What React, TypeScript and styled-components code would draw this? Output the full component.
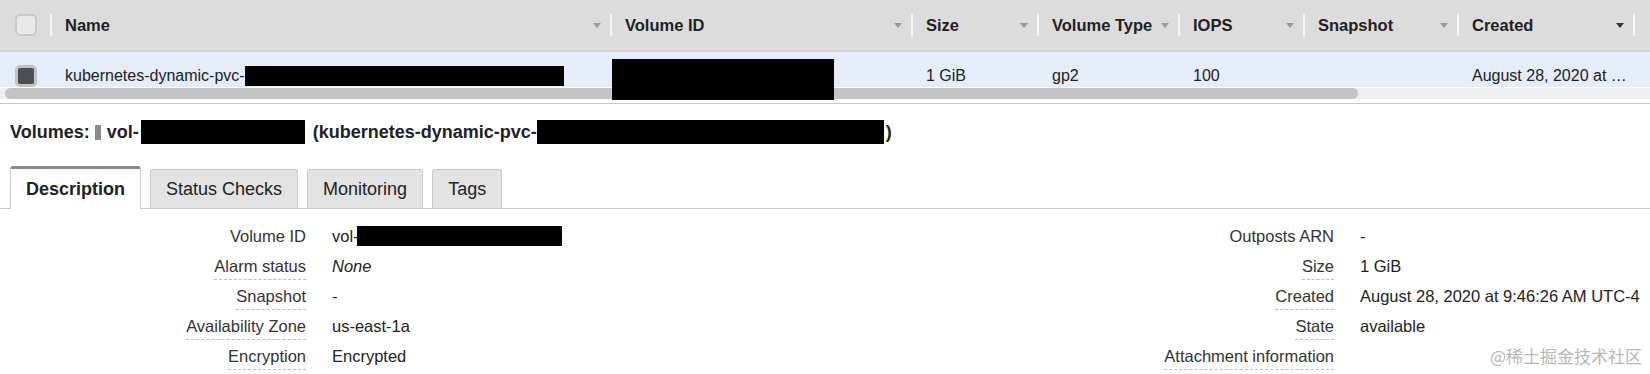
import React from "react";
import styled, { createGlobalStyle, css } from "styled-components";

const GlobalStyle = createGlobalStyle`
  html, body {
    margin: 0;
    padding: 0;
    background: #ffffff;
  }
  body {
    font-family: "Liberation Sans", Arial, sans-serif;
    color: #222;
  }
`;

type Column = { key: string; label?: string; width: string; sorted?: boolean };

const columns: Column[] = [
  { key: "check", width: "50px" },
  { key: "name", label: "Name", width: "560px" },
  { key: "volumeId", label: "Volume ID", width: "301px" },
  { key: "size", label: "Size", width: "126px" },
  { key: "type", label: "Volume Type", width: "141px" },
  { key: "iops", label: "IOPS", width: "125px" },
  { key: "snapshot", label: "Snapshot", width: "154px" },
  { key: "created", label: "Created", width: "176px", sorted: true },
  { key: "rest", width: "1fr" },
];

const gridCols = columns.map((c) => c.width).join(" ");

const leftDetails = [
  { label: "Volume ID", value: "vol-", redact: 205, plain: true },
  { label: "Alarm status", value: "None", italic: true },
  { label: "Snapshot", value: "-" },
  { label: "Availability Zone", value: "us-east-1a" },
  { label: "Encryption", value: "Encrypted" },
];

const rightDetails = [
  { label: "Outposts ARN", value: "-", plain: true },
  { label: "Size", value: "1 GiB" },
  { label: "Created", value: "August 28, 2020 at 9:46:26 AM UTC-4" },
  { label: "State", value: "available" },
  { label: "Attachment information", value: "" },
];

const tabs = ["Description", "Status Checks", "Monitoring", "Tags"];

const App = () => {
  return (
    <Page>
      <GlobalStyle />
      <Table>
        <HeaderRow>
          {columns.map((col) => {
            if (col.key === "check") {
              return (
                <CheckCell key={col.key}>
                  <Checkbox />
                </CheckCell>
              );
            }
            if (col.key === "rest") return <HeaderCell key={col.key} />;
            return (
              <HeaderCell key={col.key}>
                <span>{col.label}</span>
                <SortArrow $active={col.sorted} />
              </HeaderCell>
            );
          })}
        </HeaderRow>
        <DataRow>
          <CheckCell>
            <Checkbox $checked />
          </CheckCell>
          <DataCell>
            kubernetes-dynamic-pvc-
            <Redact $w={319} $h={20} />
          </DataCell>
          <DataCell $pad={2}>
            <Redact $w={222} $h={41} $overflow />
          </DataCell>
          <DataCell>1 GiB</DataCell>
          <DataCell>gp2</DataCell>
          <DataCell>100</DataCell>
          <DataCell />
          <DataCell>August 28, 2020 at …</DataCell>
          <DataCell />
        </DataRow>
        <ScrollTrack>
          <ScrollThumb />
        </ScrollTrack>
      </Table>

      <Heading>
        Volumes:
        <Marker />
        <HeadingPart $gap={6}>vol-</HeadingPart>
        <Redact $w={164} $h={24} $gap={2} />
        <HeadingPart $gap={8}>(kubernetes-dynamic-pvc-</HeadingPart>
        <Redact $w={347} $h={24} />
        <HeadingPart $gap={2}>)</HeadingPart>
      </Heading>

      <TabBar>
        {tabs.map((t, i) => (
          <Tab key={t} $active={i === 0}>
            {t}
          </Tab>
        ))}
      </TabBar>

      <Details>
        <DetailGrid $labelWidth={306} $width={1100}>
          {leftDetails.map((d) => (
            <React.Fragment key={d.label}>
              <Label>
                <LabelText $plain={d.plain}>{d.label}</LabelText>
              </Label>
              <Value $italic={d.italic}>
                {d.value}
                {d.redact && <Redact $w={d.redact} $h={20} $gap={-2} />}
              </Value>
            </React.Fragment>
          ))}
        </DetailGrid>
        <DetailGrid $labelWidth={234}>
          {rightDetails.map((d) => (
            <React.Fragment key={d.label}>
              <Label>
                <LabelText $plain={d.plain}>{d.label}</LabelText>
              </Label>
              <Value>{d.value}</Value>
            </React.Fragment>
          ))}
        </DetailGrid>
      </Details>

      <Watermark>@稀土掘金技术社区</Watermark>
    </Page>
  );
};

const Page = styled.div`
  position: relative;
  width: 1650px;
  height: 374px;
  overflow: hidden;
  background: #ffffff;
`;

const Table = styled.div`
  padding-bottom: 4px;
  border-bottom: 1px solid #c8c8c8;
`;

const HeaderRow = styled.div`
  display: grid;
  grid-template-columns: ${gridCols};
  align-items: center;
  height: 50px;
  background: #dcdcdc;
  border-bottom: 2px solid #d0d0d0;
`;

const HeaderCell = styled.div`
  display: flex;
  align-items: center;
  justify-content: space-between;
  height: 22px;
  padding: 0 9px 0 13px;
  border-left: 2px solid #f4f4f4;
  font-size: 16.5px;
  font-weight: bold;
  color: #222;
  white-space: nowrap;
`;

const SortArrow = styled.span<{ $active?: boolean }>`
  width: 0;
  height: 0;
  border-left: 4px solid transparent;
  border-right: 4px solid transparent;
  border-top: 5px solid ${({ $active }) => ($active ? "#333" : "#9a9a9a")};
`;

const CheckCell = styled.div`
  display: flex;
  align-items: center;
  padding-left: 15px;
`;

const Checkbox = styled.span<{ $checked?: boolean }>`
  display: block;
  width: 22px;
  height: 22px;
  box-sizing: border-box;
  border-radius: 5px;
  border: 2px solid #c9c9c9;
  background: #e9e9e9;
  ${({ $checked }) =>
    $checked &&
    css`
      border: 3px solid #c2c2c2;
      background: #4d4f52;
    `}
`;

const DataRow = styled.div`
  display: grid;
  grid-template-columns: ${gridCols};
  height: 35px;
  background: #e4edf8;
  font-size: 16px;
  color: #222;
`;

const DataCell = styled.div<{ $pad?: number }>`
  display: flex;
  align-items: center;
  padding-left: ${({ $pad }) => $pad ?? 15}px;
  white-space: nowrap;
  min-width: 0;
`;

const Redact = styled.span<{
  $w: number;
  $h: number;
  $gap?: number;
  $overflow?: boolean;
}>`
  display: inline-block;
  width: ${({ $w }) => $w}px;
  height: ${({ $h }) => $h}px;
  margin-left: ${({ $gap }) => $gap ?? 0}px;
  background: #000;
  flex-shrink: 0;
  ${({ $overflow }) =>
    $overflow &&
    css`
      align-self: flex-start;
      margin-top: 7px;
      position: relative;
      z-index: 2;
    `}
`;

const ScrollTrack = styled.div`
  display: flex;
  height: 11px;
  margin-top: 1px;
  padding-left: 5px;
  background: #eeeeee;
`;

const ScrollThumb = styled.div`
  width: 1353px;
  height: 11px;
  border-radius: 6px;
  background: #c4c4c4;
`;

const Heading = styled.div`
  display: flex;
  align-items: center;
  margin-top: 16px;
  padding-left: 10px;
  height: 24px;
  font-size: 18px;
  font-weight: bold;
  color: #222;
  white-space: nowrap;
`;

const Marker = styled.span`
  display: inline-block;
  width: 6px;
  height: 15px;
  margin-left: 5px;
  background: #8a8a8a;
`;

const HeadingPart = styled.span<{ $gap?: number }>`
  margin-left: ${({ $gap }) => $gap ?? 5}px;
`;

const TabBar = styled.div`
  display: flex;
  align-items: flex-end;
  gap: 9px;
  height: 42px;
  margin-top: 22px;
  padding-left: 10px;
  border-bottom: 1px solid #c9c9c9;
`;

const Tab = styled.div<{ $active?: boolean }>`
  display: flex;
  align-items: center;
  box-sizing: border-box;
  height: 39px;
  padding: 0 15px;
  font-size: 18px;
  color: #222;
  background: #e3e3e3;
  border: 1px solid #c9c9c9;
  border-bottom: none;
  border-radius: 3px 3px 0 0;
  ${({ $active }) =>
    $active &&
    css`
      height: 43px;
      margin-bottom: -1px;
      background: #ffffff;
      border-top: 3px solid #8a8a8a;
      font-weight: bold;
    `}
`;

const Details = styled.div`
  display: flex;
  padding-top: 12px;
`;

const DetailGrid = styled.div<{ $labelWidth: number; $width?: number }>`
  display: grid;
  grid-template-columns: ${({ $labelWidth }) => $labelWidth}px 1fr;
  grid-auto-rows: 30px;
  column-gap: 26px;
  ${({ $width }) => ($width ? `flex: 0 0 ${$width}px;` : "flex: 1;")}
  font-size: 16.5px;
`;

const Label = styled.div`
  text-align: right;
  white-space: nowrap;
`;

const LabelText = styled.span<{ $plain?: boolean }>`
  display: inline-block;
  padding-top: 5px;
  padding-bottom: 3px;
  line-height: 20px;
  color: #333;
  border-bottom: 1px dashed ${({ $plain }) => ($plain ? "transparent" : "#bdbdbd")};
`;

const Value = styled.div<{ $italic?: boolean }>`
  display: flex;
  align-items: center;
  height: 30px;
  color: #222;
  white-space: nowrap;
  font-style: ${({ $italic }) => ($italic ? "italic" : "normal")};
  line-height: 20px;
`;

const Watermark = styled.div`
  position: absolute;
  right: 8px;
  bottom: 5px;
  font-family: "Noto Sans CJK SC", sans-serif;
  font-size: 17px;
  line-height: 26px;
  color: #b8b8b8;
`;

export default App;
